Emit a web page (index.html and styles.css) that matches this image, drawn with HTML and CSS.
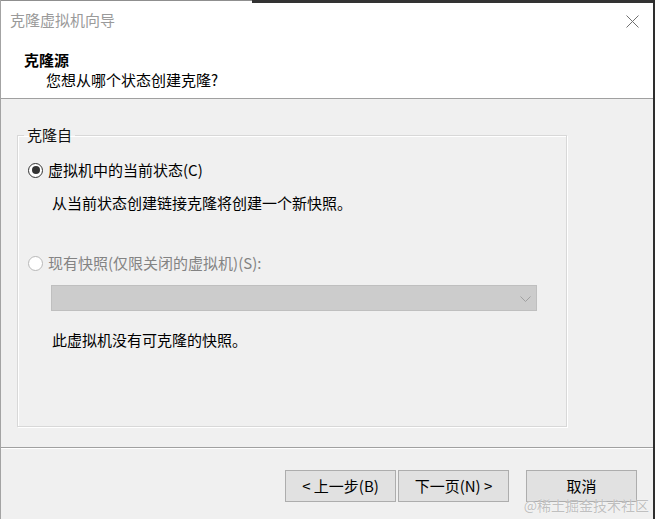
FILE: index.html
```html
<!DOCTYPE html>
<html lang="zh-CN">
<head>
<meta charset="utf-8">
<title>克隆虚拟机向导</title>
<link rel="stylesheet" href="styles.css">
</head>
<body>
<div class="window">
  <div class="frame-top"><div class="frame-top-left"></div><div class="frame-top-right"></div></div>
  <div class="titlebar">
    <span class="title">克隆虚拟机向导</span>
    <svg class="close" width="13" height="13" viewBox="0 0 13 13"><path d="M0.5 0.5 L12.5 12.5 M12.5 0.5 L0.5 12.5" stroke="#707070" stroke-width="1" fill="none"/></svg>
  </div>
  <div class="header">
    <div class="header-title">克隆源</div>
    <div class="header-sub">您想从哪个状态创建克隆?</div>
  </div>
  <div class="content">
    <fieldset class="group">
      <legend>克隆自</legend>
      <div class="group-body">
        <div class="radio-row"><span class="radio checked"></span><span>虚拟机中的当前状态(C)</span></div>
        <div class="desc">从当前状态创建链接克隆将创建一个新快照。</div>
        <div class="radio-row disabled second"><span class="radio"></span><span>现有快照(仅限关闭的虚拟机)(S):</span></div>
        <div class="select">
          <svg width="11" height="6" viewBox="0 0 11 6"><path d="M0.5 0.5 L5.5 5.5 L10.5 0.5" stroke="#a0a0a0" stroke-width="1" fill="none"/></svg>
        </div>
        <div class="note">此虚拟机没有可克隆的快照。</div>
      </div>
    </fieldset>
  </div>
  <div class="footer">
    <button class="btn">&lt; 上一步(B)</button>
    <button class="btn">下一页(N) &gt;</button>
    <button class="btn cancel">取消</button>
  </div>
  <div class="watermark">@稀土掘金技术社区</div>
</div>
</body>
</html>
```

FILE: styles.css
```css
html, body {
  margin: 0;
  padding: 0;
  background: #f0f0f0;
}

body {
  font-family: "Noto Sans CJK SC", "Noto Sans", sans-serif;
  font-size: 15px;
  color: #000;
}

.window {
  position: relative;
  width: 655px;
  height: 519px;
  box-sizing: border-box;
  border-left: 1px solid #a3a3a3;
  border-right: 2px solid #2e2e2e;
  background: #f0f0f0;
  overflow: hidden;
}

.frame-top {
  display: flex;
  height: 3px;
}

.frame-top-left {
  width: 251px;
  box-sizing: border-box;
  border-top: 1px solid #8f8f8f;
  background: #ffffff;
}

.frame-top-right {
  flex: 1;
  background: #333333;
}

.titlebar {
  height: 34px;
  background: #ffffff;
  display: flex;
  align-items: center;
  justify-content: space-between;
  padding: 0 14px 0 9px;
}

.title {
  line-height: 34px;
  color: #9a9a9a;
}

.close {
  display: block;
  margin-top: 2px;
}

.header {
  background: #ffffff;
  padding: 13px 0 8px 23px;
  border-bottom: 1px solid #a0a0a0;
}

.header-title {
  font-weight: bold;
  line-height: 20px;
}

.header-sub {
  line-height: 20px;
  padding-left: 22px;
}

.content {
  padding: 0 0 20px 16px;
}

.group {
  width: 550px;
  box-sizing: border-box;
  margin: 26px 0 0 0;
  padding: 0;
  border: 1px solid #d8d8d8;
  box-shadow: inset 1px 1px 0 #ffffff, 1px 1px 0 #ffffff;
  min-width: 0;
}

.group legend {
  margin-left: 6px;
  padding: 0 3px;
  line-height: 20px;
  color: #111;
}

.group-body {
  padding: 15px 0 76px 10px;
}

.radio-row {
  display: flex;
  align-items: center;
  gap: 5px;
  height: 20px;
  line-height: 20px;
}

.radio-row.second {
  margin-top: 40px;
}

.radio {
  width: 15px;
  height: 15px;
  box-sizing: border-box;
  border-radius: 50%;
  border: 1px solid #b8b8b8;
  background: #ffffff;
  display: flex;
  align-items: center;
  justify-content: center;
}

.radio.checked {
  border-color: #333333;
}

.radio.checked::after {
  content: "";
  width: 8px;
  height: 8px;
  border-radius: 50%;
  background: #333333;
}

.disabled {
  color: #838383;
}

.desc {
  margin-top: 13px;
  padding-left: 24px;
  line-height: 20px;
}

.select {
  margin: 12px 0 0 23px;
  width: 486px;
  height: 26px;
  box-sizing: border-box;
  background: #cccccc;
  border: 1px solid #bfbfbf;
  display: flex;
  align-items: center;
  justify-content: flex-end;
  padding-right: 5px;
}

.select svg {
  display: block;
  margin-top: 1px;
}

.note {
  margin-top: 19px;
  padding-left: 24px;
  line-height: 20px;
}

.footer {
  border-top: 1px solid #a0a0a0;
  box-shadow: inset 0 1px 0 #ffffff;
  padding: 22px 16px 0 0;
  display: flex;
  justify-content: flex-end;
  gap: 2px;
}

.btn {
  width: 111px;
  height: 32px;
  box-sizing: border-box;
  border: 1px solid #adadad;
  background: #e1e1e1;
  font-family: "Noto Sans CJK SC", "Noto Sans", sans-serif;
  font-size: 15px;
  color: #000;
  padding: 0;
  line-height: 30px;
}

.btn.cancel {
  margin-left: 15px;
}

.watermark {
  position: absolute;
  right: 4px;
  bottom: 6px;
  font-size: 14px;
  line-height: 16px;
  color: rgba(150, 150, 150, 0.6);
  text-shadow: 0 0 1px #ffffff;
  white-space: nowrap;
}
```
